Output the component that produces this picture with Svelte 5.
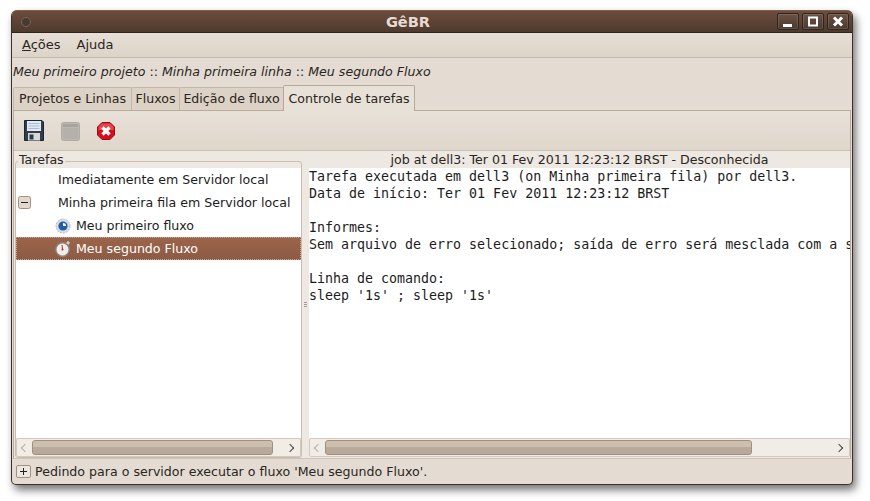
<script>
  const tabs = [
    { label: "Projetos e Linhas", w: 119 },
    { label: "Fluxos", w: 49 },
    { label: "Edição de fluxo", w: 105 },
    { label: "Controle de tarefas", w: 132, active: true }
  ];

  const log = `Tarefa executada em dell3 (on Minha primeira fila) por dell3.
Data de início: Ter 01 Fev 2011 12:23:12 BRST

Informes:
Sem arquivo de erro selecionado; saída de erro será mesclada com a saída padrão.

Linha de comando:
sleep '1s' ; sleep '1s'`;
</script>

<div class="desktop">
  <div class="window">
    <header class="titlebar">
      <span class="menu-dot"></span>
      <span class="title">GêBR</span>
      <div class="wm-buttons">
        <button class="wm-btn" aria-label="Minimizar">
          <svg width="14" height="14" viewBox="0 0 14 14"><rect x="2" y="9" width="9" height="3" fill="#fff" /></svg>
        </button>
        <button class="wm-btn" aria-label="Maximizar">
          <svg width="14" height="14" viewBox="0 0 14 14"><rect x="3" y="2.5" width="8" height="8" fill="none" stroke="#fff" stroke-width="2" /></svg>
        </button>
        <button class="wm-btn" aria-label="Fechar">
          <svg width="14" height="14" viewBox="0 0 14 14"><path d="M3 2.5 L11 10.5 M11 2.5 L3 10.5" stroke="#fff" stroke-width="3" /></svg>
        </button>
      </div>
    </header>

    <nav class="menubar">
      <span class="menu-item"><u>A</u>ções</span>
      <span class="menu-item">A<u>j</u>uda</span>
    </nav>

    <div class="breadcrumb">
      <i>Meu primeiro projeto</i> :: <i>Minha primeira linha</i> :: <i>Meu segundo Fluxo</i>
    </div>

    <div class="tabs">
      {#each tabs as tab}
        <div class="tab" class:active={tab.active} style="width: {tab.w}px">{tab.label}</div>
      {/each}
    </div>

    <section class="notebook">
      <div class="toolbar">
        <svg width="24" height="24" viewBox="0 0 24 24">
          <path d="M2.5 2.5 H20 L21.5 4 V22.5 H2.5 Z" fill="#2f3d4e" stroke="#1b2530" />
          <rect x="5" y="3" width="14" height="10" fill="#e2eaf5" />
          <path d="M6.5 5.5 H17.5 M6.5 8 H17.5 M6.5 10.5 H17.5" stroke="#a3bcd9" />
          <rect x="6" y="15" width="12" height="7.5" fill="#d8d8d8" />
          <rect x="7.5" y="16.5" width="4" height="5" fill="#2c3a4a" />
        </svg>
        <svg width="24" height="24" viewBox="0 0 24 24">
          <rect x="2.5" y="4.5" width="18" height="18" rx="2" fill="#bcb8b1" stroke="#b0aca5" />
          <rect x="4" y="6" width="15" height="3" fill="#a8a49d" />
          <rect x="4" y="10" width="15" height="11" fill="#b5b1aa" />
        </svg>
        <svg width="24" height="24" viewBox="0 0 24 24">
          <path d="M6 4.5 H14 L18.5 9 V17 L14 21.5 H6 L1.5 17 V9 Z" fill="#d3101c" stroke="#9c0a12" />
          <path d="M6 5.5 H14 L17.5 9 V12 H2.5 V9 Z" fill="#f26a6f" opacity="0.6" />
          <path d="M6.5 9.5 L13.5 16.5 M13.5 9.5 L6.5 16.5" stroke="#fff" stroke-width="3.2" />
        </svg>
      </div>

      <div class="panes">
        <fieldset class="tasks">
          <legend>Tarefas</legend>
          <div class="tree">
            <div class="row"><span class="label top">Imediatamente em Servidor local</span></div>
            <div class="row">
              <span class="expander">
                <svg width="13" height="13" viewBox="0 0 13 13">
                  <rect x="0.5" y="0.5" width="12" height="12" rx="2" fill="#e3d8cc" stroke="#a3917f" />
                  <path d="M3 6.5 H10" stroke="#222" />
                </svg>
              </span>
              <span class="label top">Minha primeira fila em Servidor local</span>
            </div>
            <div class="row child">
              <svg class="row-icon" width="16" height="16" viewBox="0 0 16 16">
                <circle cx="8" cy="8" r="7" fill="#d9dde2" stroke="#b4b9c0" stroke-dasharray="2 1" />
                <circle cx="8" cy="8" r="4.6" fill="#1f5fa8" />
                <path d="M8 5 A3 3 0 0 1 11 8 L8 8 Z" fill="#fff" />
              </svg>
              <span class="label">Meu primeiro fluxo</span>
            </div>
            <div class="row child selected">
              <svg class="row-icon" width="16" height="16" viewBox="0 0 16 16">
                <rect x="11.5" y="0.5" width="3" height="3" fill="#d2cec9" transform="rotate(40 13 2)" />
                <circle cx="7.5" cy="8.5" r="6.7" fill="#f0ece8" stroke="#8a847e" stroke-width="1.4" />
                <path d="M7.5 8.5 L7 4" stroke="#b3322a" />
                <circle cx="7.5" cy="8.5" r="1" fill="#8b3a30" />
              </svg>
              <span class="label">Meu segundo Fluxo</span>
            </div>
          </div>
          <div class="hscroll">
            <span class="arrow left"></span>
            <div class="track"><div class="thumb" style="width: 241px"></div></div>
            <span class="arrow right"></span>
          </div>
        </fieldset>

        <div class="grip"><span></span><span></span><span></span></div>

        <div class="details">
          <div class="job-title">job at dell3: Ter 01 Fev 2011 12:23:12 BRST - Desconhecida</div>
          <pre class="log">{log}</pre>
          <div class="hscroll">
            <span class="arrow left"></span>
            <div class="track"><div class="thumb" style="width: 427px"></div></div>
            <span class="arrow right"></span>
          </div>
        </div>
      </div>
    </section>

    <footer class="statusbar">
      <span class="status-expander">
        <svg width="15" height="13" viewBox="0 0 15 13">
          <rect x="0.5" y="0.5" width="14" height="12" rx="1.5" fill="#eee7df" stroke="#a3917f" />
          <path d="M4 6.5 H11 M7.5 3 V10" stroke="#222" />
        </svg>
      </span>
      <span>Pedindo para o servidor executar o fluxo 'Meu segundo Fluxo'.</span>
    </footer>
  </div>
</div>

<style>
  :global(body) {
    margin: 0;
    background: #fff;
  }

  .desktop {
    width: 870px;
    height: 501px;
    padding: 10px 0 0 11px;
    box-sizing: border-box;
    overflow: hidden;
    font-family: "DejaVu Sans", sans-serif;
    font-size: 12.6px;
    color: #1c1c1c;
  }

  .window {
    width: 842px;
    height: 475px;
    box-sizing: border-box;
    display: flex;
    flex-direction: column;
    background: #e4dcd2;
    border: 1px solid #3a3028;
    border-top: 0;
    border-radius: 6px 6px 5px 5px;
    box-shadow: 3px 5px 9px rgba(0, 0, 0, 0.55);
    overflow: hidden;
  }

  .titlebar {
    height: 23px;
    flex: none;
    display: flex;
    align-items: center;
    box-sizing: border-box;
    padding: 0 3px 0 9px;
    background: linear-gradient(#6d4c3c, #4e3a2e);
    border-top: 1px solid #7d5f4e;
    border-bottom: 1px solid #2e241d;
  }

  .menu-dot {
    width: 8px;
    height: 8px;
    border-radius: 50%;
    border: 1px solid #75665b;
    background: #493a30;
  }

  .title {
    flex: 1;
    text-align: center;
    font-weight: bold;
    font-size: 14.6px;
    color: #e6dcd2;
    padding-left: 8px;
  }

  .wm-buttons {
    display: flex;
    gap: 3px;
  }

  .wm-btn {
    width: 22px;
    height: 17px;
    padding: 0;
    display: flex;
    align-items: center;
    justify-content: center;
    background: linear-gradient(#6b5244, #4c392e);
    border: 1px solid #2f251e;
    border-radius: 2px;
    box-shadow: inset 0 0 0 1px rgba(255, 255, 255, 0.12);
  }

  .menubar {
    height: 25px;
    flex: none;
    box-sizing: border-box;
    display: flex;
    align-items: center;
    gap: 16px;
    padding: 0 0 1px 10px;
    font-size: 13px;
    background: linear-gradient(#e7dfd6, #ddd4c9);
    border-bottom: 1px solid #c6b9ab;
  }

  .menu-item {
    color: #2a2622;
  }

  .breadcrumb {
    height: 27px;
    flex: none;
    line-height: 27px;
    padding-left: 1px;
    white-space: pre-wrap;
    color: #2a2622;
  }

  .tabs {
    height: 25px;
    flex: none;
    display: flex;
    padding-left: 1px;
    align-items: flex-end;
  }

  .tab {
    height: 23px;
    box-sizing: border-box;
    line-height: 21px;
    text-align: center;
    white-space: nowrap;
    background: #dcd2c6;
    border: 1px solid #c4b7a8;
    border-bottom: 0;
    margin-right: -1px;
    border-radius: 2px 2px 0 0;
    color: #2a2622;
  }

  .tab.active {
    height: 26px;
    line-height: 25px;
    background: #e8e1d8;
    margin-bottom: -1px;
    margin-right: 0;
    position: relative;
    z-index: 1;
    border-color: #b6a998;
  }

  .notebook {
    flex: none;
    height: 349px;
    margin: 0 1px 0 1px;
    box-sizing: border-box;
    display: flex;
    flex-direction: column;
    border: 1px solid #b9ac9c;
    border-bottom-color: #cfc4b7;
  }

  .toolbar {
    height: 40px;
    flex: none;
    box-sizing: border-box;
    display: flex;
    align-items: center;
    gap: 13px;
    padding: 0 0 2px 8px;
    background: linear-gradient(#e8e1d8, #dfd6cb);
    border-bottom: 1px solid #cbbfb1;
  }

  .panes {
    flex: 1;
    min-height: 0;
    display: flex;
    background: #ede8e1;
  }

  .tasks {
    width: 287px;
    flex: none;
    margin: 1px 0 0 1px;
    padding: 0;
    box-sizing: border-box;
    display: flex;
    flex-direction: column;
    min-width: 0;
    min-height: 0;
    border: 1px solid #cabdae;
    border-radius: 3px;
  }

  .tasks legend {
    padding: 1px 1px 3px;
    margin-left: 2px;
    line-height: 14px;
    color: #2a2622;
  }

  .tree {
    flex: 1;
    margin-top: -2px;
    background: #fff;
    min-height: 0;
  }

  .row {
    position: relative;
    height: 23px;
    display: flex;
    align-items: center;
    white-space: nowrap;
    color: #1c1c1c;
  }

  .label.top {
    position: absolute;
    left: 42px;
  }

  .expander {
    margin-left: 2px;
    display: flex;
  }

  .row.child {
    padding-left: 39px;
  }

  .row-icon {
    flex: none;
    margin-right: 5px;
  }

  .row.selected {
    background: linear-gradient(#9c654b, #8c5a43);
    outline: 1px dotted #c9a48f;
    outline-offset: -1px;
    color: #fff;
  }

  .grip {
    width: 7px;
    flex: none;
    display: flex;
    flex-direction: column;
    justify-content: center;
    align-items: center;
    gap: 1px;
  }

  .grip span {
    width: 3px;
    height: 1px;
    background: #a99b8b;
  }

  .details {
    flex: 1;
    min-width: 0;
    display: flex;
    flex-direction: column;
  }

  .job-title {
    height: 17px;
    flex: none;
    line-height: 17px;
    text-align: center;
    white-space: nowrap;
    color: #2a2622;
  }

  .log {
    flex: 1;
    min-height: 0;
    margin: 0;
    overflow: hidden;
    background: #fff;
    font-family: "DejaVu Sans Mono", monospace;
    font-size: 13.3px;
    line-height: 17px;
    color: #1c1c1c;
  }

  .hscroll {
    height: 19px;
    flex: none;
    margin: 0;
    box-sizing: border-box;
    display: flex;
    align-items: center;
    background: #f1ece6;
    border: 1px solid #d4c9bc;
    border-radius: 2px;
  }

  .details .hscroll {
    margin-bottom: 1px;
  }

  .track {
    flex: 1;
    min-width: 0;
    height: 15px;
    margin: 0 1px;
  }

  .thumb {
    height: 15px;
    box-sizing: border-box;
    border: 1px solid #a08f7e;
    border-radius: 3px;
    background: linear-gradient(#cdbfb0 50%, #b9a999 50%);
  }

  .arrow {
    width: 14px;
    height: 15px;
    flex: none;
    display: flex;
    align-items: center;
    justify-content: center;
  }

  .arrow::before {
    content: "";
    width: 5px;
    height: 5px;
    border-top: 1.5px solid #4a443e;
    border-right: 1.5px solid #4a443e;
  }

  .arrow.left::before {
    transform: rotate(-135deg);
    border-color: #b8aea3;
    margin-left: 1px;
  }

  .arrow.right::before {
    transform: rotate(45deg);
    margin-right: 6px;
  }

  .statusbar {
    flex: 1;
    display: flex;
    align-items: center;
    gap: 4px;
    padding: 0 0 1px 4px;
    color: #2a2622;
  }

  .status-expander {
    display: flex;
  }
</style>
